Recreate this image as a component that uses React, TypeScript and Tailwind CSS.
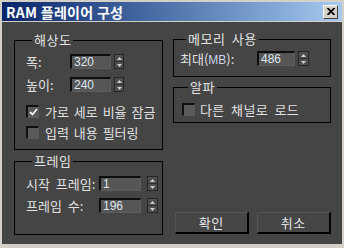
import React from "react";

const KR = "font-['Noto_Sans_CJK_KR','Noto_Sans',sans-serif]";

// small up/down spinner next to each number field
function Spinner({ className = "" }: { className?: string }) {
  return (
    <div className={`flex h-[15px] w-[10px] flex-col border border-[#262626] bg-[#4e4e4e] ${className}`}>
      <div className="flex flex-1 items-center justify-center border-b border-[#303030]">
        <svg width="5" height="3" viewBox="0 0 5 3">
          <path d="M2.5 0 L5 3 L0 3 Z" fill="#cfcfcf" />
        </svg>
      </div>
      <div className="flex flex-1 items-center justify-center">
        <svg width="5" height="3" viewBox="0 0 5 3">
          <path d="M0 0 L5 0 L2.5 3 Z" fill="#cfcfcf" />
        </svg>
      </div>
    </div>
  );
}

function NumField({ value, width }: { value: string; width: string }) {
  return (
    <div
      className={`flex h-[15px] ${width} items-center border-t-2 border-l-2 border-b border-r border-t-[#0e0e0e] border-l-[#0e0e0e] border-b-[#5e5e5e] border-r-[#5e5e5e] bg-[#565656] pl-[2px] font-['Liberation_Sans',sans-serif] text-[12px] leading-none text-[#dde6ef]`}
    >
      {value}
    </div>
  );
}

function Check({ checked }: { checked?: boolean }) {
  return (
    <div className="flex h-[13px] w-[13px] shrink-0 items-center justify-center border-t-2 border-l-2 border-b border-r border-t-[#111] border-l-[#111] border-b-[#5c5c5c] border-r-[#5c5c5c] bg-[#5a5a5a]">
      {checked && (
        <svg width="9" height="8" viewBox="0 0 9 8">
          <path d="M1 4 L3.5 6.5 L8 1" stroke="#f0f0f0" strokeWidth="1.8" fill="none" />
        </svg>
      )}
    </div>
  );
}

function Group({ title, className, children }: { title: string; className: string; children: React.ReactNode }) {
  return (
    <fieldset className={`border border-black ${className}`}>
      <legend className="ml-[6px] px-[2px] text-[13px] leading-[16px] tracking-[0.5px] text-[#e2e2e2]">{title}</legend>
      {children}
    </fieldset>
  );
}

function Button({ label, width }: { label: string; width: string }) {
  return (
    <div
      className={`flex h-[22px] ${width} items-center justify-center border-t border-l border-b-2 border-r-2 border-t-[#555] border-l-[#555] border-b-black border-r-black bg-[#464646] text-[13px] tracking-[0.5px] text-[#e4e4e4]`}
    >
      {label}
    </div>
  );
}

export default function App() {
  return (
    <div className={`h-[248px] w-[344px] overflow-hidden bg-[#d4d0c8] px-[2px] pt-[2px] pb-[4px] ${KR}`}>
      {/* title bar */}
      <div className="flex h-[19px] items-center justify-between bg-gradient-to-r from-[#0a246a] to-[#a6caf0] pl-[4px] pr-[4px]">
        <span className="text-[14px] font-bold leading-none tracking-[0.3px] text-white">RAM 플레이어 구성</span>
        <div className="flex h-[14px] w-[15px] items-center justify-center border-t border-l border-b border-r border-t-white border-l-white border-b-[#404040] border-r-[#404040] bg-[#d4d0c8]">
          <svg width="8" height="7" viewBox="0 0 8 7">
            <path d="M0.5 0 L7.5 7 M7.5 0 L0.5 7" stroke="black" strokeWidth="1.8" />
          </svg>
        </div>
      </div>

      <div className="mt-px flex h-[222px] bg-[#454545] pl-[12px] text-[#e0e0e0]">
        {/* left column */}
        <div className="mt-[10px] flex w-[149px] flex-col">
          <Group title="해상도" className="h-[118px] pl-[11px]">
            <div className="mt-[6px] flex items-center">
              <span className="w-[44px] text-[13px] leading-none">폭:</span>
              <NumField value="320" width="w-[41px]" />
              <Spinner className="ml-[3px]" />
            </div>
            <div className="mt-[8px] flex items-center">
              <span className="w-[44px] text-[13px] leading-none">높이:</span>
              <NumField value="240" width="w-[41px]" />
              <Spinner className="ml-[3px]" />
            </div>
            <div className="mt-[13px] flex items-center gap-[6px]">
              <Check checked />
              <span className="whitespace-nowrap text-[13px] leading-none [word-spacing:2px]">가로 세로 비율 잠금</span>
            </div>
            <div className="mt-[8px] flex items-center gap-[6px]">
              <Check />
              <span className="whitespace-nowrap text-[13px] leading-none [word-spacing:2px]">입력 내용 필터링</span>
            </div>
          </Group>

          <Group title="프레임" className="mt-[3px] h-[82px] pl-[11px]">
            <div className="mt-[7px] flex items-center">
              <span className="w-[73px] whitespace-nowrap text-[13px] leading-none [word-spacing:3px]">시작 프레임:</span>
              <NumField value="1" width="w-[42px]" />
              <Spinner className="ml-[6px] w-[11px]" />
            </div>
            <div className="mt-[7px] flex items-center">
              <span className="w-[73px] whitespace-nowrap text-[13px] leading-none [word-spacing:3px]">프레임 수:</span>
              <NumField value="196" width="w-[42px]" />
              <Spinner className="ml-[6px] w-[11px]" />
            </div>
          </Group>
        </div>

        {/* right column */}
        <div className="ml-[10px] mt-[9px] flex w-[158px] flex-col">
          <Group title="메모리 사용" className="h-[46px] pl-[6px] [word-spacing:3px]">
            <div className="mt-[4px] flex items-center">
              <span className="w-[77px] whitespace-nowrap text-[13px] leading-none">
                최대(<span className="font-['Liberation_Sans',sans-serif] text-[12px] text-[#c8d4e6]">MB</span>):
              </span>
              <NumField value="486" width="w-[38px]" />
              <Spinner className="ml-[3px] w-[11px]" />
            </div>
          </Group>

          <Group title="알파" className="mt-[2px] h-[44px] pl-[8px]">
            <div className="mt-[8px] flex items-center gap-[5px]">
              <Check />
              <span className="whitespace-nowrap text-[13px] leading-none tracking-[0.4px] [word-spacing:3px]">다른 채널로 로드</span>
            </div>
          </Group>

          <div className="mt-[89px] flex gap-[8px] pl-[2px]">
            <Button label="확인" width="w-[75px]" />
            <Button label="취소" width="w-[76px]" />
          </div>
        </div>
      </div>
    </div>
  );
}
